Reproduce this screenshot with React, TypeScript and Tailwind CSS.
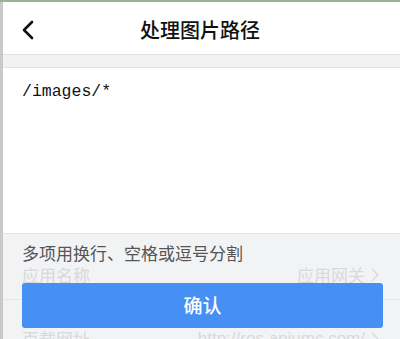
export default function App() {
  return (
    <div className="w-[400px] h-[339px] overflow-hidden flex flex-col bg-[#f2f3f5] font-['Noto_Sans_CJK_SC',sans-serif]">
      <div className="h-[2px] shrink-0 bg-[#9db38f]" />
      <div className="flex flex-1 min-h-0">
        <div className="w-[3px] shrink-0 bg-[#c9c9c9]" />
        <div className="flex-1 flex flex-col relative overflow-hidden">
          {/* header */}
          <div className="h-[53px] shrink-0 bg-white border-b border-[#e3e3e3] flex items-center relative">
            <button className="absolute left-[16px] top-[17px] w-[18px] h-[22px] flex items-center justify-center">
              <svg width="14" height="20" viewBox="0 0 14 20" fill="none">
                <path d="M11 2L3 10l8 8" stroke="#111" strokeWidth="2.6" strokeLinecap="round" strokeLinejoin="round" />
              </svg>
            </button>
            <div className="flex-1 text-center text-[20px] font-medium text-[#111] leading-none pt-[4px] pr-[3px]">
              处理图片路径
            </div>
          </div>
          <div className="h-[13px] shrink-0 bg-[#f1f2f4] border-b border-[#e3e3e3]" />
          {/* text area */}
          <div className="h-[166px] shrink-0 bg-white border-b border-[#e3e3e3] px-[19px] pt-[12px]">
            <div className="font-['Liberation_Mono',monospace] text-[16.5px] leading-[24px] text-[#111]">/images/*</div>
          </div>
          {/* bottom */}
          <div className="flex-1 relative px-[19px]">
            <div className="pt-[8px] text-[17px] leading-[22px] text-[#555]">多项用换行、空格或逗号分割</div>
            <div className="flex items-center justify-between h-[22px] text-[17px] leading-[22px] text-[#d8d9db]">
              <span>应用名称</span>
              <span className="flex items-center gap-[6px] pr-[2px]">
                应用网关
                <svg width="8" height="14" viewBox="0 0 8 14" fill="none">
                  <path d="M1 1l6 6-6 6" stroke="#d8d9db" strokeWidth="1.4" />
                </svg>
              </span>
            </div>
            <div className="mt-[13px] -mx-[19px] border-t border-[#e6e7e9]" />
            <div className="flex items-center justify-between h-[22px] mt-[28px] text-[17px] leading-[22px] text-[#d8d9db]">
              <span>页载网址</span>
              <span className="flex items-center gap-[6px] pr-[2px] font-['Liberation_Sans',sans-serif]">
                http://res.apiumc.com/
                <svg width="8" height="14" viewBox="0 0 8 14" fill="none">
                  <path d="M1 1l6 6-6 6" stroke="#d8d9db" strokeWidth="1.4" />
                </svg>
              </span>
            </div>
            <button className="absolute left-[19px] right-[17px] top-[49px] h-[45px] rounded-[3px] bg-[#4690f5] text-white text-[19px] font-medium">
              确认
            </button>
          </div>
        </div>
      </div>
    </div>
  );
}
